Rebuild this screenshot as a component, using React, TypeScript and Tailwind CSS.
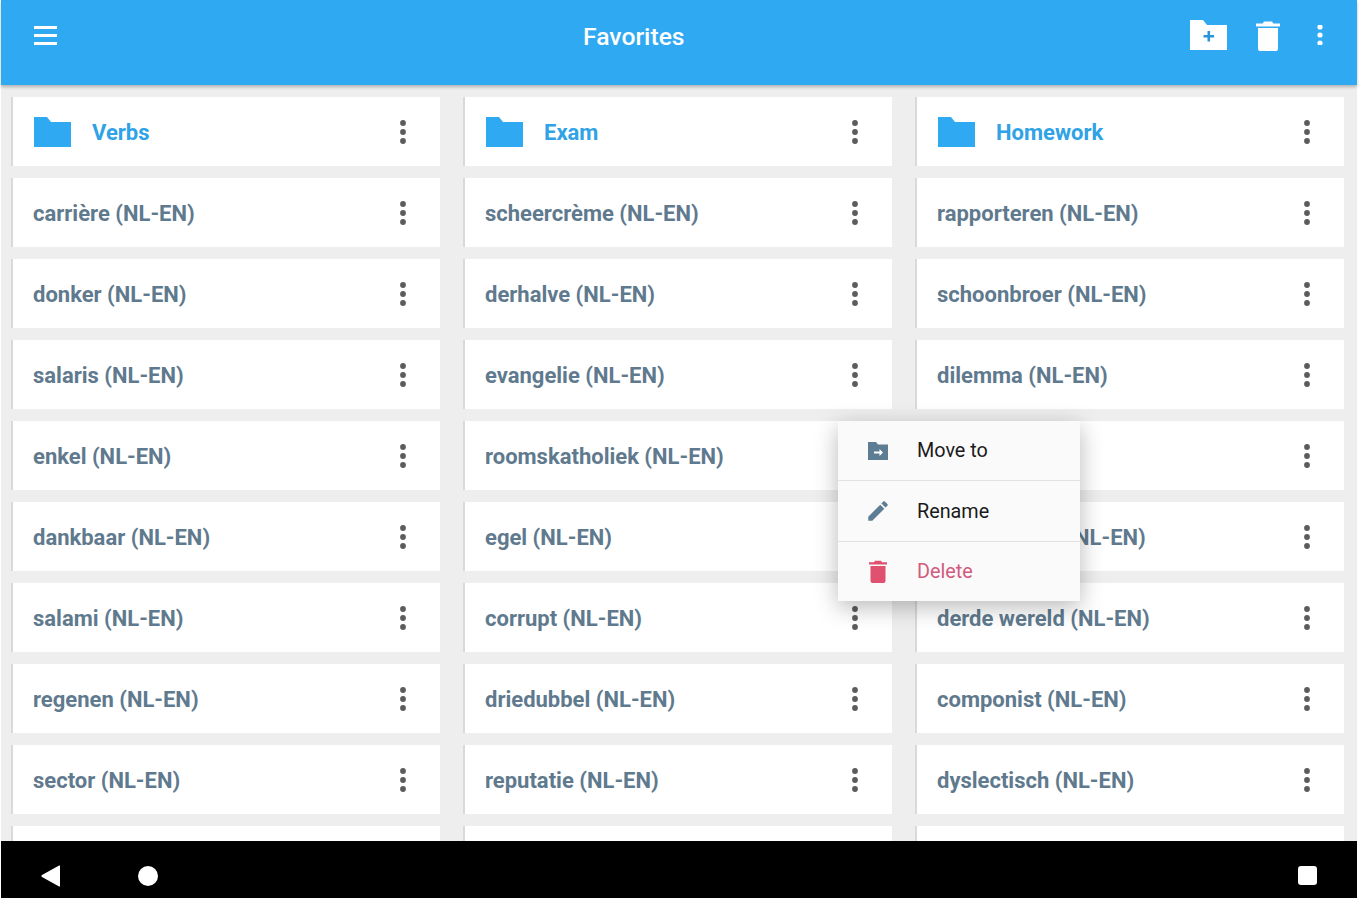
import React from "react";

const columns = [
  ["carrière", "donker", "salaris", "enkel", "dankbaar", "salami", "regenen", "sector"],
  ["scheercrème", "derhalve", "evangelie", "roomskatholiek", "egel", "corrupt", "driedubbel", "reputatie"],
  ["rapporteren", "schoonbroer", "dilemma", "boek", "onderzoeker", "derde wereld", "componist", "dyslectisch"],
];
const folders = ["Verbs", "Exam", "Homework"];

function Dots() {
  return (
    <svg width="24" height="26" viewBox="0 0 24 26" className="fill-[#5c5c5c]">
      <circle cx="12" cy="4" r="2.900" />
      <circle cx="12" cy="13" r="2.900" />
      <circle cx="12" cy="22" r="2.900" />
    </svg>
  );
}

function HeaderDots() {
  return (
    <svg width="24" height="20" viewBox="0 0 24 20" className="fill-white">
      <circle cx="12" cy="1.500" r="2.600" transform="translate(0 .5)" />
      <circle cx="12" cy="10" r="2.600" />
      <circle cx="12" cy="18" r="2.600" />
    </svg>
  );
}

function Card({ children, dots = true }: { children?: React.ReactNode; dots?: boolean }) {
  return (
    <div className="h-[69px] bg-white border-l-2 border-[#d9d9d9] flex items-center justify-between pl-5 pr-[25px]">
      <div className="flex items-center min-w-0 pt-[2px]">{children}</div>
      {dots && <Dots />}
    </div>
  );
}

const folderPath = "M0 0H13L17 5H37V30H0Z";

export default function App() {
  return (
    <div className="relative w-[1359px] h-[898px] overflow-hidden bg-white pl-px pr-[2px] flex flex-col font-['Roboto',sans-serif]">
      <header className="relative z-10 h-[85px] shrink-0 bg-[#30a9f3] shadow-[0_2px_3px_rgba(0,0,0,0.25)] flex items-center justify-between pl-[33px] pr-[25px]">
        <div className="flex flex-col gap-[5px] w-[23px] -mt-[15px]">
          <div className="h-[3px] bg-white" />
          <div className="h-[3px] bg-white" />
          <div className="h-[3px] bg-white" />
        </div>
        <h1 className="absolute left-[582px] top-[21px] text-[24.700px] leading-[32px] font-medium text-white">Favorites</h1>
        <div className="flex items-center -mt-[15px]">
          <svg width="37" height="30" viewBox="0 0 37 30" className="mr-[29px]">
            <path d={folderPath} fill="#fff" />
            <path d="M17.500 11h2.600v4h4v2.600h-4v4h-2.600v-4h-4V15h4z" fill="#2a95d9" />
          </svg>
          <svg width="24" height="31" viewBox="0 0 24 31" className="mr-[28px] fill-white">
            <path d="M2 8h20v21a2 2 0 0 1-2 2H4a2 2 0 0 1-2-2z" />
            <path d="M0 3.500h6.500L8 1.500h8l1.500 2H24V6.500H0z" />
          </svg>
          <HeaderDots />
        </div>
      </header>

      <main className="flex-1 min-h-0 overflow-hidden bg-[#eeeeee] pt-3 pl-[10px]">
        <div className="grid grid-cols-[repeat(3,429px)] gap-x-[23px]">
          {columns.map((items, c) => (
            <div key={c} className="flex flex-col gap-3">
              <Card>
                <svg width="37" height="30" viewBox="0 0 37 30" className="ml-px mr-[21px] shrink-0 -mt-[2px]">
                  <path d={folderPath} fill="#30a9f3" />
                </svg>
                <span className="text-[22px] leading-7 font-bold text-[#30a2e6]">{folders[c]}</span>
              </Card>
              {items.map((t) => (
                <Card key={t}>
                  <span className="text-[22px] leading-7 font-bold text-[#5f7a8e] whitespace-nowrap">{t} (NL-EN)</span>
                </Card>
              ))}
              <Card dots={false} />
            </div>
          ))}
        </div>
      </main>

      <nav className="relative z-10 h-[57px] shrink-0 bg-black flex items-center justify-between pl-10 pr-10 pt-3">
        <div className="flex items-center gap-[77px]">
          <svg width="20" height="22" viewBox="0 0 20 22" className="fill-white">
            <path d="M19 1v20a.6.6 0 0 1-.9.4L1 12a1.100 1.100 0 0 1 0-2L18.100.6a.6.6 0 0 1 .9.4z" />
          </svg>
          <div className="w-5 h-5 rounded-full bg-white" />
        </div>
        <div className="w-[19px] h-[19px] rounded-[3px] bg-white" />
      </nav>

      <div className="absolute z-20 left-[838px] top-[421px] w-[242px] h-[180px] bg-[#fafafa] shadow-[0_6px_22px_rgba(0,0,0,0.28)] flex flex-col">
        <div className="h-[60px] flex items-center border-b border-[#e2e2e2]">
          <svg width="20" height="18" viewBox="0 0 20 18" className="ml-[30px] mr-[29px]">
            <path d="M0 0H8L10 2.500H20V18H0Z" fill="#5c7d93" />
            <path d="M6 9.500h5.500V7l3.500 3.500L11.500 14v-2.500H6z" fill="#fff" />
          </svg>
          <span className="text-[19.800px] leading-7 text-[#1a1a1a]">Move to</span>
        </div>
        <div className="h-[61px] flex items-center border-b border-[#e2e2e2]">
          <svg width="26" height="26" viewBox="0 0 24 24" fill="#5c7d93" className="ml-[27px] mr-[26px]">
            <path d="M3 17.250V21h3.750L17.810 9.940l-3.750-3.750L3 17.250zM20.710 7.040c.39-.39.39-1.020 0-1.410l-2.340-2.340c-.39-.39-1.020-.39-1.410 0l-1.830 1.830 3.750 3.750 1.830-1.830z" />
          </svg>
          <span className="text-[19.800px] leading-7 text-[#1a1a1a] pt-[2px]">Rename</span>
        </div>
        <div className="flex-1 flex items-center">
          <svg width="18" height="23" viewBox="0 0 18 23" fill="#e0506f" className="ml-[31px] mr-[30px]">
            <path d="M1.500 6h15v15a2 2 0 0 1-2 2h-11a2 2 0 0 1-2-2z" />
            <path d="M0 2.200h5L6 .8h6l1 1.400h5V4.400H0z" />
          </svg>
          <span className="text-[19.800px] leading-7 text-[#d25a7f]">Delete</span>
        </div>
      </div>
    </div>
  );
}
